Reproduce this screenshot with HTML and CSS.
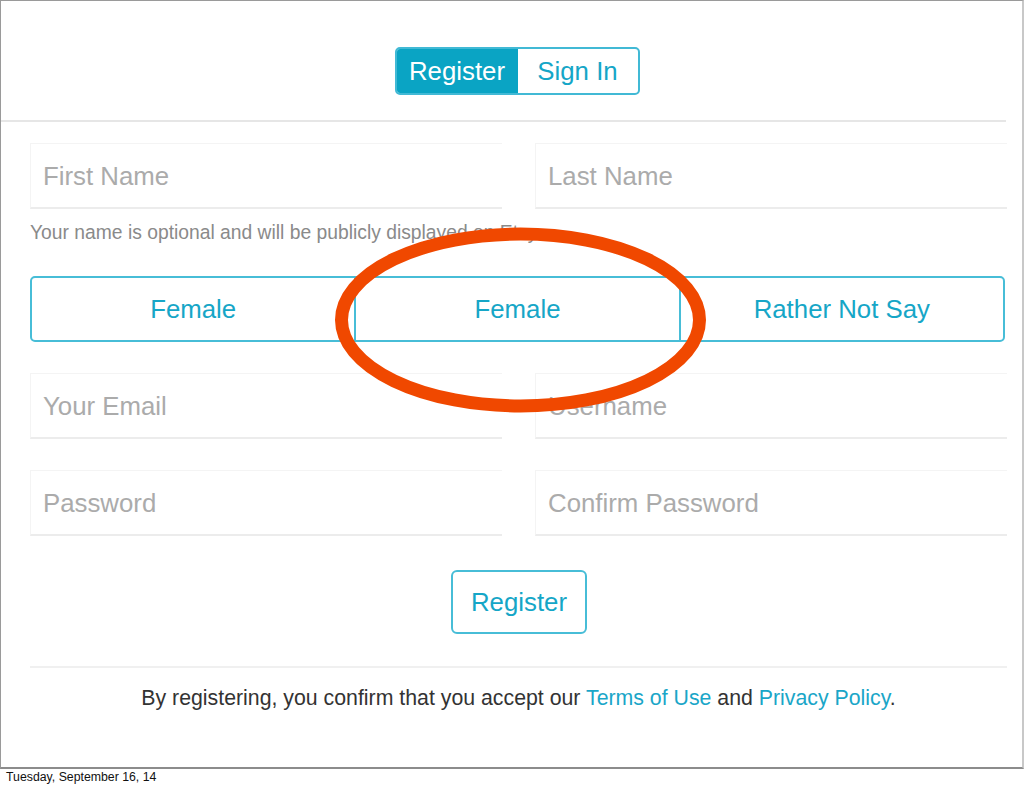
FILE: index.html
```html
<!DOCTYPE html>
<html>
<head>
<meta charset="utf-8">
<link rel="stylesheet" href="styles.css">
</head>
<body>
<div class="slide">
  <div class="top">
    <div class="seg">
      <div class="seg-item seg-active">Register</div>
      <div class="seg-item">Sign In</div>
    </div>
  </div>
  <div class="divider"></div>
  <div class="form">
    <div class="row">
      <div class="field">First Name</div>
      <div class="field">Last Name</div>
    </div>
    <div class="help">Your name is optional and will be publicly displayed on Etsy.</div>
    <div class="gender">
      <div class="g-item">Female</div>
      <div class="g-item">Female</div>
      <div class="g-item">Rather Not Say</div>
    </div>
    <div class="row row-email">
      <div class="field">Your Email</div>
      <div class="field">Username</div>
    </div>
    <div class="row row-pass">
      <div class="field">Password</div>
      <div class="field">Confirm Password</div>
    </div>
    <div class="btn-wrap"><div class="btn">Register</div></div>
    <div class="divider2"></div>
    <div class="legal">By registering, you confirm that you accept our <span class="link">Terms of Use</span> and <span class="link">Privacy Policy</span>.</div>
  </div>
  <svg class="circle" width="1024" height="768" viewBox="0 0 1024 768">
    <ellipse cx="520.5" cy="320" rx="179" ry="86" fill="none" stroke="#f04800" stroke-width="13"/>
  </svg>
</div>
<div class="footer">Tuesday, September 16, 14</div>
</body>
</html>
```
FILE: styles.css
```css
html, body {
  margin: 0;
  padding: 0;
  background: #ffffff;
}
body {
  font-family: "Liberation Sans", Arial, Helvetica, sans-serif;
  width: 1024px;
  height: 788px;
  overflow: hidden;
}
.slide {
  position: relative;
  box-sizing: border-box;
  width: 1024px;
  height: 769px;
  border-top: 1px solid #9a9a9a;
  border-left: 1px solid #9a9a9a;
  border-right: 2px solid #c8c8c8;
  border-bottom: 2px solid #8c8c8c;
  background: #fff;
  overflow: hidden;
}
.top {
  display: flex;
  justify-content: center;
  padding-top: 46px;
  height: 73px;
  padding-left: 11px;
}
.seg {
  display: flex;
  height: 48px;
  box-sizing: border-box;
  border: 2px solid #41b9d5;
  border-radius: 5px;
  overflow: hidden;
}
.seg-item {
  width: 120px;
  display: flex;
  align-items: center;
  justify-content: center;
  font-size: 25.8px;
  color: #15a6c7;
  box-sizing: border-box;
}
.seg-item.seg-active {
  background: #0aa4c4;
  color: #ffffff;
  width: 121px;
}
.divider {
  height: 2px;
  background: #e6e6e6;
  margin-right: 16px;
}
.form {
  padding-left: 29px;
  width: 977px;
}
.row {
  display: flex;
  justify-content: space-between;
  margin-top: 21px;
}
.field {
  box-sizing: border-box;
  width: 472px;
  height: 66px;
  border-top: 1px solid #f4f4f4;
  border-left: 1px solid #f4f4f4;
  border-bottom: 2px solid #ececec;
  padding-left: 12px;
  padding-top: 2px;
  display: flex;
  align-items: center;
  font-size: 25.8px;
  color: #ababab;
}
.help {
  margin-top: 12px;
  font-size: 19.3px;
  color: #8a8a8a;
  height: 24px;
  line-height: 24px;
}
.gender {
  display: flex;
  margin-top: 31px;
  height: 66px;
  width: 975px;
  box-sizing: border-box;
  border: 2px solid #47bdd7;
  border-radius: 5px;
}
.g-item {
  flex: 1;
  display: flex;
  align-items: center;
  justify-content: center;
  font-size: 25.8px;
  color: #16a6c7;
}
.g-item + .g-item {
  border-left: 2px solid #47bdd7;
}
.row-email {
  margin-top: 31px;
}
.row-pass {
  margin-top: 31px;
}
.btn-wrap {
  display: flex;
  justify-content: center;
  margin-top: 34px;
  padding-left: 1px;
}
.btn {
  box-sizing: border-box;
  width: 136px;
  height: 64px;
  border: 2px solid #47bdd7;
  border-radius: 6px;
  display: flex;
  align-items: center;
  justify-content: center;
  font-size: 25.8px;
  color: #15a6c7;
}
.divider2 {
  margin-top: 32px;
  height: 2px;
  background: #f0f0f0;
}
.legal {
  margin-top: 18px;
  text-align: center;
  font-size: 21.3px;
  color: #333333;
  padding-left: 0;
}
.link {
  color: #1aa6c8;
}
.circle {
  position: absolute;
  left: -1px;
  top: -1px;
  pointer-events: none;
}
.footer {
  font-size: 12.3px;
  color: #111;
  padding-left: 6px;
  padding-top: 0;
  line-height: 16px;
}
```
